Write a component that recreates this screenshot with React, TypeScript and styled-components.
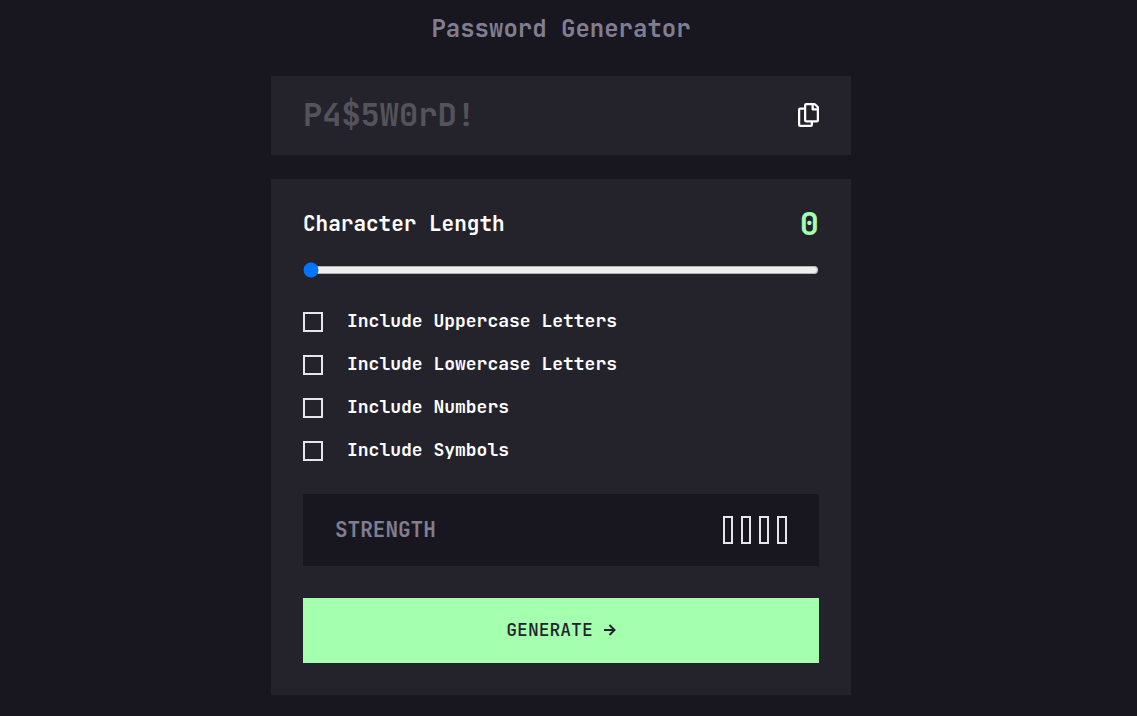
import React, { useState } from "react";
import styled, { createGlobalStyle } from "styled-components";

const colors = {
  page: "#18171f",
  card: "#24232c",
  muted: "#817d92",
  placeholder: "#54535b",
  light: "#e6e5ea",
  accent: "#a4ffaf",
};

const GlobalStyle = createGlobalStyle`
  *, *::before, *::after { box-sizing: border-box; }
  body {
    margin: 0;
    padding-right: 15px;
    background: ${colors.page};
    color: #fff;
    font-family: "JetBrains Mono", "DejaVu Sans Mono", monospace;
  }
  button, input { font-family: inherit; }
`;

const Page = styled.main`
  display: flex;
  flex-direction: column;
  width: 100%;
  max-width: 580px;
  margin: 0 auto;
  padding: 13px 0 20px;
`;

const Title = styled.h1`
  margin: 0 0 31px;
  color: ${colors.muted};
  font-size: 24px;
  font-weight: 600;
  line-height: 32px;
  text-align: center;
`;

const PasswordPanel = styled.section`
  display: flex;
  align-items: center;
  height: 79px;
  margin-bottom: 24px;
  padding: 0 32px 2px;
  background: ${colors.card};
`;

const PasswordInput = styled.input`
  flex: 1;
  min-width: 0;
  height: 42px;
  padding: 0;
  border: 0;
  outline: 0;
  background: transparent;
  color: ${colors.light};
  font-size: 32px;
  font-weight: 700;
  &::placeholder { color: ${colors.placeholder}; opacity: 1; }
`;

const CopyButton = styled.button`
  display: flex;
  padding: 0;
  border: 0;
  background: transparent;
  color: #fff;
  cursor: pointer;
`;

const Settings = styled.form`
  display: flex;
  flex-direction: column;
  padding: 24px 32px 32px;
  background: ${colors.card};
`;

const LengthRow = styled.div`
  display: flex;
  align-items: center;
  justify-content: space-between;
  height: 42px;
`;

const LengthLabel = styled.label`
  font-size: 21px;
  font-weight: 700;
  line-height: 28px;
`;

const LengthValue = styled.output`
  color: ${colors.accent};
  font-size: 32px;
  font-weight: 700;
  line-height: 42px;
`;

const Slider = styled.input`
  width: 100%;
  height: 16px;
  margin: 17px 0 31px;
`;

const Options = styled.div`
  display: flex;
  flex-direction: column;
  gap: 19px;
  margin-bottom: 32px;
`;

const Option = styled.label`
  display: flex;
  align-items: flex-start;
  gap: 24px;
  font-size: 18px;
  font-weight: 700;
  line-height: 24px;
`;

const Checkbox = styled.input`
  appearance: none;
  width: 20px;
  height: 20px;
  margin: 3px 0 0;
  border: 2px solid ${colors.light};
  &:checked { border-color: ${colors.accent}; background: ${colors.accent}; }
`;

const Strength = styled.div`
  display: flex;
  align-items: center;
  justify-content: space-between;
  height: 72px;
  margin-bottom: 32px;
  padding: 0 32px;
  background: ${colors.page};
  color: ${colors.muted};
  font-size: 21px;
  font-weight: 600;
  line-height: 28px;
`;

const Bars = styled.div`
  display: flex;
  gap: 8px;
`;

const Bar = styled.span`
  width: 10px;
  height: 28px;
  border: 2px solid ${colors.light};
`;

const GenerateButton = styled.button`
  display: flex;
  align-items: center;
  justify-content: center;
  gap: 11px;
  height: 65px;
  padding: 0 0 1px;
  border: 0;
  background: ${colors.accent};
  color: ${colors.card};
  font-size: 18px;
  font-weight: 500;
  line-height: 24px;
  cursor: pointer;
`;

const optionNames = ["Uppercase Letters", "Lowercase Letters", "Numbers", "Symbols"];

const CopyIcon = () => (
  <svg width="21" height="24" viewBox="0 0 21 24" fill="currentColor" aria-hidden="true">
    <path d="M20.341 3.091 17.909.659A2.25 2.25 0 0 0 16.319 0H8.25A2.25 2.25 0 0 0 6 2.25V4.5H2.25A2.25 2.25 0 0 0 0 6.75v15A2.25 2.25 0 0 0 2.25 24h10.5A2.25 2.25 0 0 0 15 21.75V19.5h3.75A2.25 2.25 0 0 0 21 17.25V4.682a2.25 2.25 0 0 0-.659-1.591ZM12.469 21.75H2.53a.281.281 0 0 1-.281-.281V7.03a.281.281 0 0 1 .281-.281H6v10.5a2.25 2.25 0 0 0 2.25 2.25h4.5v1.969a.282.282 0 0 1-.281.281Zm6-4.5H8.53a.281.281 0 0 1-.281-.281V2.53a.281.281 0 0 1 .281-.281H13.5v4.125c0 .621.504 1.125 1.125 1.125h4.125v9.469a.282.282 0 0 1-.281.281Zm.281-12h-3v-3h.451c.075 0 .147.03.2.082L18.667 4.6a.283.283 0 0 1 .082.199v.451Z" />
  </svg>
);

const ArrowIcon = () => (
  <svg width="12" height="12" viewBox="0 0 12 12" fill="none" stroke="currentColor" strokeWidth="2" aria-hidden="true">
    <path d="M0 6h11M5.5 1l5 5-5 5" />
  </svg>
);

export default function App() {
  const [length, setLength] = useState(0);
  return (
    <>
      <GlobalStyle />
      <Page>
        <Title>Password Generator</Title>
        <PasswordPanel>
          <PasswordInput type="text" placeholder="P4$5W0rD!" aria-label="Password" readOnly />
          <CopyButton type="button" aria-label="Copy password">
            <CopyIcon />
          </CopyButton>
        </PasswordPanel>
        <Settings onSubmit={(e) => e.preventDefault()}>
          <LengthRow>
            <LengthLabel htmlFor="length">Character Length</LengthLabel>
            <LengthValue htmlFor="length">{length}</LengthValue>
          </LengthRow>
          <Slider
            id="length"
            type="range"
            min={0}
            max={20}
            value={length}
            onChange={(e) => setLength(Number(e.target.value))}
          />
          <Options>
            {optionNames.map((name) => (
              <Option key={name}>
                <Checkbox type="checkbox" />
                Include {name}
              </Option>
            ))}
          </Options>
          <Strength>
            <span>STRENGTH</span>
            <Bars>
              <Bar />
              <Bar />
              <Bar />
              <Bar />
            </Bars>
          </Strength>
          <GenerateButton type="submit">
            GENERATE
            <ArrowIcon />
          </GenerateButton>
        </Settings>
      </Page>
    </>
  );
}
